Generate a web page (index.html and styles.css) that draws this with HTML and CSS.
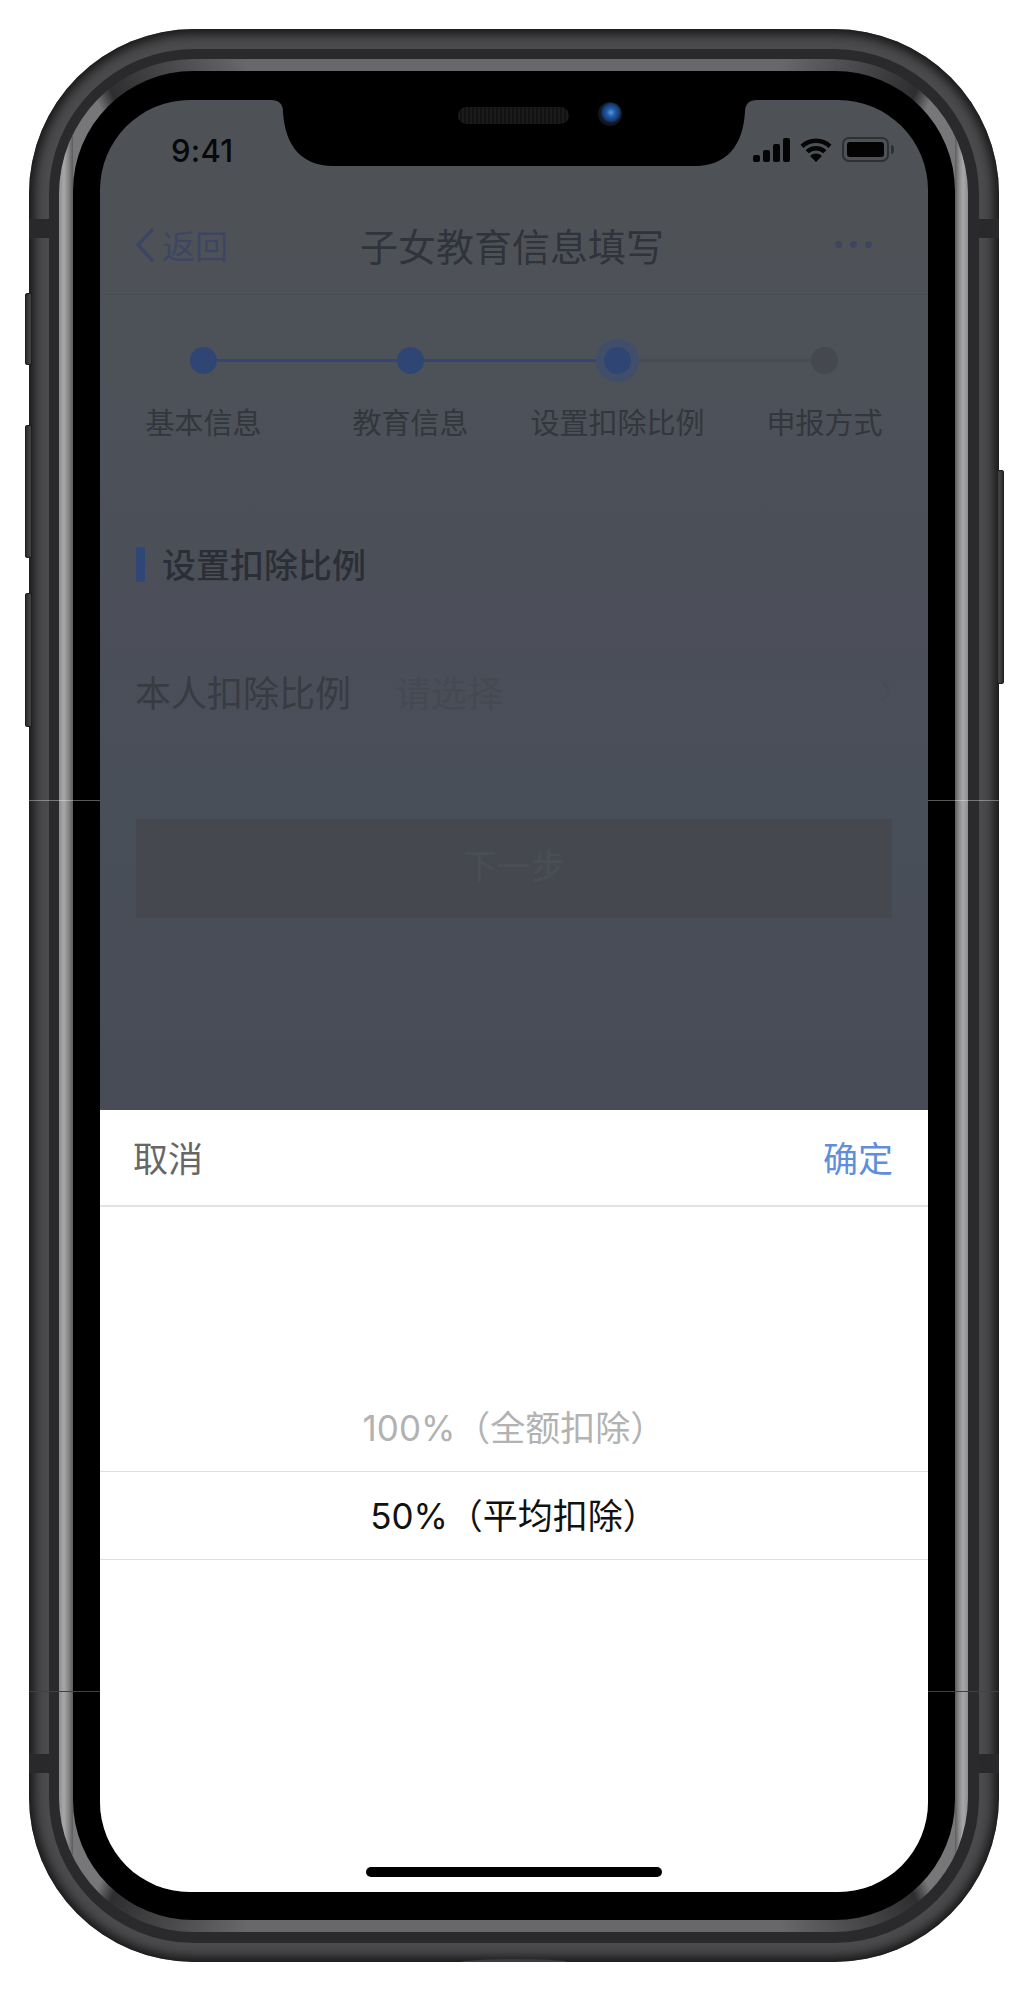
FILE: index.html
```html
<!DOCTYPE html>
<html lang="zh-CN">
<head>
<meta charset="utf-8">
<title>子女教育信息填写</title>
<link rel="stylesheet" href="styles.css">
</head>
<body>
<div class="page">
  <div class="phone">
    <span class="side side-l1"></span>
    <span class="side side-l2"></span>
    <span class="side side-l3"></span>
    <span class="side side-r"></span>
    <span class="antenna antenna-tl"></span>
    <span class="antenna antenna-tr"></span>
    <span class="antenna antenna-bl"></span>
    <span class="antenna antenna-br"></span>
    <span class="seam seam-a-l"></span>
    <span class="seam seam-a-r"></span>
    <span class="seam seam-b-l"></span>
    <span class="seam seam-b-r"></span>
    <span class="port"></span>
    <div class="band">
      <div class="rim">
        <div class="bezel">
          <div class="screen">
            <div class="status">
              <span class="time">9:41</span>
              <div class="status-icons">
                <svg class="ic-signal" viewBox="0 0 37 24" aria-hidden="true">
                  <rect x="0" y="17" width="7" height="7" rx="2"/>
                  <rect x="10" y="12" width="7" height="12" rx="2"/>
                  <rect x="20" y="6" width="7" height="18" rx="2"/>
                  <rect x="30" y="0" width="7" height="24" rx="2"/>
                </svg>
                <svg class="ic-wifi" viewBox="0 0 32 24" aria-hidden="true">
                  <path class="arc" d="M2 8.4A20 20 0 0 1 30 8.4"/>
                  <path class="arc" d="M7.2 13.8A12.6 12.6 0 0 1 24.8 13.8"/>
                  <path d="M16 24L10 18A8.5 8.5 0 0 1 22 18Z"/>
                </svg>
                <div class="battery"><span class="battery-fill"></span></div>
              </div>
            </div>
            <svg class="notch" viewBox="0 0 486 66" aria-hidden="true">
              <path d="M0 0Q12 0 12 12C14 45 30 66 62 66L424 66C456 66 472 45 474 12Q474 0 486 0Z"/>
            </svg>
            <span class="speaker"></span>
            <span class="camera"></span>

            <header class="nav">
              <div class="back">
                <svg class="ic-back" viewBox="0 0 21 36" aria-hidden="true"><path d="M18 2L3 18L18 34"/></svg>
                <span>返回</span>
              </div>
              <h1 class="nav-title">子女教育信息填写</h1>
              <div class="more"><i></i><i></i><i></i></div>
            </header>

            <ol class="steps">
              <li class="step done"><span class="dot"></span><span class="step-label">基本信息</span></li>
              <li class="step done"><span class="dot"></span><span class="step-label">教育信息</span></li>
              <li class="step current"><span class="dot"></span><span class="step-label">设置扣除比例</span></li>
              <li class="step todo"><span class="dot"></span><span class="step-label">申报方式</span></li>
            </ol>

            <section class="form">
              <h2 class="form-title">设置扣除比例</h2>
              <div class="form-row">
                <span class="form-label">本人扣除比例</span>
                <span class="form-value">请选择</span>
                <svg class="ic-next" viewBox="0 0 12 24" aria-hidden="true"><path d="M2 2L10 12L2 22"/></svg>
              </div>
              <div class="next-btn">下一步</div>
            </section>

            <div class="sheet">
              <div class="sheet-head">
                <span class="cancel">取消</span>
                <span class="confirm">确定</span>
              </div>
              <div class="picker">
                <div class="option">100%（全额扣除）</div>
                <div class="option selected">50%（平均扣除）</div>
              </div>
              <span class="home"></span>
            </div>
          </div>
        </div>
      </div>
    </div>
  </div>
</div>
</body>
</html>
```
FILE: styles.css
```css
* { box-sizing: border-box; }
html, body { margin: 0; padding: 0; background: #fff; }
body { font-family: "Noto Sans CJK SC", "Noto Sans", sans-serif; }
.page { width: 1028px; height: 1992px; padding: 29px 29px 30px; background: #fff; overflow: hidden; }

/* device frame */
.phone {
  position: relative;
  height: 1933px;
  padding: 20px 20px 19px;
  border-radius: 165px;
  background: #4b4b4d;
  box-shadow: inset 0 0 11px 5px #151516;
}
.band {
  height: 100%;
  padding: 10px 11px 11px 10px;
  border-radius: 145px;
  background: #2a2a2c;
}
.rim {
  position: relative;
  height: 100%;
  padding: 12px 13px 12px 14px;
  border-radius: 135px;
  background: conic-gradient(#68686a 0 16deg, #2e2e30 24deg, #77777a 25deg 155deg, #2e2e30 156deg, #68686a 164deg 196deg, #2e2e30 204deg, #77777a 205deg 335deg, #2e2e30 336deg, #68686a 344deg);
}
.rim::before {
  content: "";
  position: absolute;
  inset: 0;
  border-radius: inherit;
  background: linear-gradient(to right, #8f8f91 0, #a8a8a9 5px, #8a8a8b 9px, #5c5c5e 14px, transparent 14px, transparent calc(100% - 13px), #5c5c5e calc(100% - 13px), #8a8a8b calc(100% - 9px), #a8a8a9 calc(100% - 5px), #8f8f91 100%);
  -webkit-mask-image: conic-gradient(transparent 0 24deg, #000 25deg 155deg, transparent 156deg 204deg, #000 205deg 335deg, transparent 336deg);
  mask-image: conic-gradient(transparent 0 24deg, #000 25deg 155deg, transparent 156deg 204deg, #000 205deg 335deg, transparent 336deg);
}
.bezel {
  position: relative;
  height: 100%;
  padding: 29px 27px 28px;
  border-radius: 120px;
  background: #000;
}
.side {
  position: absolute;
  width: 7px;
  background: linear-gradient(to right, #2a2a2c, #4e4e50);
  box-shadow: inset 0 0 1px 1px #1c1c1d;
}
.side-l1 { left: -4px; top: 264px; height: 72px; border-radius: 3px 0 0 3px; }
.side-l2 { left: -4px; top: 396px; height: 133px; border-radius: 3px 0 0 3px; }
.side-l3 { left: -4px; top: 564px; height: 134px; border-radius: 3px 0 0 3px; }
.side-r { right: -5px; top: 441px; height: 214px; border-radius: 0 3px 3px 0; background: linear-gradient(to left, #2a2a2c, #4e4e50); }
.antenna { position: absolute; width: 20px; height: 19px; background: #29292b; }
.antenna-tl { left: 0; top: 190px; }
.antenna-tr { right: 0; top: 190px; }
.antenna-bl { left: 0; top: 1725px; }
.antenna-br { right: 0; top: 1725px; }
.seam { position: absolute; z-index: 1; width: 71px; height: 1px; background: rgba(255, 255, 255, .35); }
.seam-a-l { left: 0; top: 771px; }
.seam-a-r { right: 0; top: 771px; }
.seam-b-l { left: 0; top: 1662px; background: #414143; }
.seam-b-r { right: 0; top: 1662px; background: #414143; }
.port { position: absolute; left: 433px; bottom: 0; width: 105px; height: 3px; border-radius: 50% 50% 0 0 / 100% 100% 0 0; background: #3b3b3d; }

/* screen */
.screen {
  position: relative;
  height: 100%;
  overflow: hidden;
  border-radius: 90px;
  background: linear-gradient(to bottom, #4e5256 0, #4e5258 180px, #4c5058 380px, #4b4e59 560px, #484f58 700px, #484c57 1010px);
}
.status { display: flex; align-items: center; justify-content: space-between; height: 100px; padding: 0 34px 0 71px; }
.time { font-family: "Inter", sans-serif; font-size: 31px; font-weight: 500; color: #08090a; letter-spacing: .3px; }
.status-icons { display: flex; align-items: center; gap: 10px; margin-top: -1px; margin-right: 5px; }
.ic-signal { display: block; width: 37px; height: 24px; fill: #050506; }
.ic-wifi { display: block; width: 32px; height: 24px; fill: #050506; }
.ic-wifi .arc { fill: none; stroke: #050506; stroke-width: 4.4; }
.battery { position: relative; width: 47px; height: 25px; padding: 3px; border: 2px solid #2d3034; border-radius: 7px; }
.battery::after { content: ""; position: absolute; right: -7px; top: 6px; width: 3px; height: 9px; border-radius: 0 4px 4px 0; background: #2d3034; }
.battery-fill { display: block; width: 100%; height: 100%; border-radius: 3px; background: #030304; }
.notch { position: absolute; left: 171px; top: 0; display: block; width: 486px; height: 66px; fill: #000; }
.speaker {
  position: absolute; left: 358px; top: 7px; width: 111px; height: 17px; border-radius: 9px;
  background: repeating-linear-gradient(to right, #1b1b1c 0, #1b1b1c 2px, #121213 2px, #121213 4px);
}
.camera {
  position: absolute; left: 498px; top: 2px; width: 24px; height: 24px; border-radius: 50%;
  background: radial-gradient(circle at 54% 44%, #5f95d8 0, #1f5cab 22%, #173c72 44%, #0e1a30 56%, #161618 62%, #0c0c0d 100%);
}

/* nav */
.nav { display: flex; align-items: center; height: 95px; padding: 0 56px 5px 35px; border-bottom: 1px solid #4a4e54; }
.back { display: flex; flex: none; align-items: center; gap: 6px; width: 225px; font-size: 33px; color: #3c4663; }
.ic-back { display: block; width: 21px; height: 36px; fill: none; stroke: #3c4663; stroke-width: 3.6; }
.nav-title { margin: 0; font-size: 38px; font-weight: 400; line-height: 50px; color: #30333a; }
.more { display: flex; gap: 8px; margin-left: auto; }
.more i { display: block; width: 7px; height: 7px; border-radius: 50%; background: #3d4560; }

/* steps */
.steps { display: grid; grid-template-columns: repeat(4, 1fr); margin: 0; padding: 44px 0 0; list-style: none; }
.step { position: relative; display: flex; flex-direction: column; align-items: center; }
.step::before { content: ""; position: absolute; left: 50%; top: 20px; width: 100%; height: 3px; background: #34456f; }
.step.current::before { background: #484b51; }
.step.todo::before { display: none; }
.dot { position: relative; width: 27px; height: 27px; margin: 8px 0; border-radius: 50%; background: #2f4675; }
.current .dot { box-shadow: 0 0 0 8px #404e6b; }
.todo .dot { background: #45484e; }
.step-label { margin-top: 20px; font-size: 29px; line-height: 38px; color: #33363d; white-space: nowrap; }

/* form */
.form { padding: 0 36px; }
.form-title { position: relative; margin: 102px 0 0; padding-left: 26px; font-size: 34px; font-weight: 500; line-height: 44px; color: #2b2e36; }
.form-title::before { content: ""; position: absolute; left: 0; top: 5px; width: 9px; height: 35px; border-radius: 2px; background: #2f4676; }
.form-row { display: flex; align-items: center; height: 100px; margin: 55px 0 0 -1px; }
.form-label { width: 260px; font-size: 36px; color: #383b42; }
.form-value { flex: 1; font-size: 36px; color: #454952; }
.ic-next { display: block; width: 12px; height: 24px; fill: none; stroke: #484c53; stroke-width: 2; }
.next-btn { display: flex; align-items: center; justify-content: center; height: 99px; margin-top: 78px; padding-bottom: 8px; font-size: 34px; color: #4a4e56; background: #45484f; }

/* sheet */
.sheet { position: absolute; left: 0; right: 0; bottom: 0; height: 782px; background: #fff; }
.sheet-head { display: flex; align-items: center; justify-content: space-between; height: 97px; padding: 0 35px 2px 33px; border-bottom: 2px solid #e3e3e5; font-size: 35px; }
.cancel { color: #666; }
.confirm { color: #5f8edb; }
.picker { padding-top: 176px; }
.option { display: flex; align-items: center; justify-content: center; height: 88px; padding-bottom: 4px; font-family: "Inter", "Noto Sans CJK SC", sans-serif; font-size: 35px; color: #b2b2b2; }
.option.selected { height: 89px; color: #111; border-top: 1px solid #dedee0; border-bottom: 1px solid #dedee0; }
.home { position: absolute; left: 266px; bottom: 15px; width: 296px; height: 10px; border-radius: 5px; background: #000; }
```
